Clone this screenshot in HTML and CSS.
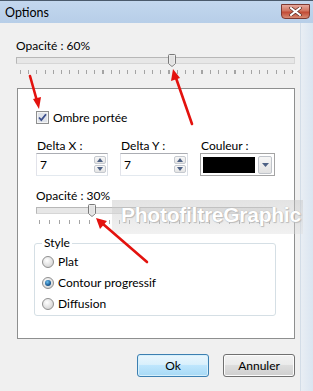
FILE: index.html
```html
<!DOCTYPE html>
<html lang="fr">
<head>
    <meta charset="UTF-8">
    <title>Options</title>
    <link rel="stylesheet" href="styles.css">
</head>
<body>
<div class="window">
    <div class="titlebar">
        <span class="title">Options</span>
        <span class="close">
            <svg width="13" height="9" viewBox="0 0 13 9">
                <path d="M2 1 L11 8 M11 1 L2 8" stroke="#5a2a22" stroke-width="3.4" stroke-linecap="square"/>
                <path d="M2 1 L11 8 M11 1 L2 8" stroke="#fff" stroke-width="2" stroke-linecap="square"/>
            </svg>
        </span>
    </div>

    <div class="main">
        <div class="content">
            <div class="label">Opacité : 60%</div>
            <div class="slider slider-wide">
                <div class="track"></div>
                <svg class="thumb" style="left: 152px" width="8" height="13" viewBox="0 0 8 13">
                    <path d="M0.5 1.5 Q0.5 0.5 1.5 0.5 H6.5 Q7.5 0.5 7.5 1.5 V9.5 L4 12.5 L0.5 9.5 Z" fill="#f4f4f4" stroke="#7a7a7a"/>
                    <path d="M1.5 1.5 H6.5 V9 L4 11.2 L1.5 9 Z" fill="#e2e2e2"/>
                </svg>
            </div>
            <div class="ticks ticks-wide"></div>

            <div class="panel">
                <div class="check-row">
                    <svg class="checkbox" width="13" height="13" viewBox="0 0 13 13">
                        <rect x="0.5" y="0.5" width="12" height="12" fill="#f4f4f4" stroke="#8e8f8f"/>
                        <rect x="2" y="2" width="9" height="9" fill="#dfe3ea"/>
                        <path d="M3 6.5 L5.3 9 L10 3.2" fill="none" stroke="#3c4f8c" stroke-width="1.8"/>
                    </svg>
                    <span>Ombre portée</span>
                </div>

                <div class="fields">
                    <div class="field field-x">
                        <div class="field-label">Delta X :</div>
                        <div class="spin">
                            <span class="spin-value">7</span>
                            <span class="spin-buttons">
                                <span class="spin-btn"><svg width="6" height="4" viewBox="0 0 6 4"><path d="M0 4 L3 0 L6 4 Z" fill="#4d6185"/></svg></span>
                                <span class="spin-btn"><svg width="6" height="4" viewBox="0 0 6 4"><path d="M0 0 L3 4 L6 0 Z" fill="#4d6185"/></svg></span>
                            </span>
                        </div>
                    </div>
                    <div class="field field-y">
                        <div class="field-label">Delta Y :</div>
                        <div class="spin">
                            <span class="spin-value">7</span>
                            <span class="spin-buttons">
                                <span class="spin-btn"><svg width="6" height="4" viewBox="0 0 6 4"><path d="M0 4 L3 0 L6 4 Z" fill="#4d6185"/></svg></span>
                                <span class="spin-btn"><svg width="6" height="4" viewBox="0 0 6 4"><path d="M0 0 L3 4 L6 0 Z" fill="#4d6185"/></svg></span>
                            </span>
                        </div>
                    </div>
                    <div class="field field-color">
                        <div class="field-label">Couleur :</div>
                        <div class="combo">
                            <span class="swatch"></span>
                            <span class="combo-btn"><svg width="7" height="4" viewBox="0 0 7 4"><path d="M0 0 L3.5 4 L7 0 Z" fill="#4d6185"/></svg></span>
                        </div>
                    </div>
                </div>

                <div class="label label-inner">Opacité : 30%</div>
                <div class="slider slider-small">
                    <div class="track"></div>
                    <svg class="thumb" style="left: 52px" width="8" height="13" viewBox="0 0 8 13">
                        <path d="M0.5 1.5 Q0.5 0.5 1.5 0.5 H6.5 Q7.5 0.5 7.5 1.5 V9.5 L4 12.5 L0.5 9.5 Z" fill="#f4f4f4" stroke="#7a7a7a"/>
                        <path d="M1.5 1.5 H6.5 V9 L4 11.2 L1.5 9 Z" fill="#e2e2e2"/>
                    </svg>
                </div>
                <div class="ticks ticks-small"></div>

                <fieldset class="style-group">
                    <legend>Style</legend>
                    <div class="radio-row">
                        <span class="radio"></span>
                        <span>Plat</span>
                    </div>
                    <div class="radio-row">
                        <span class="radio checked"></span>
                        <span>Contour progressif</span>
                    </div>
                    <div class="radio-row">
                        <span class="radio"></span>
                        <span>Diffusion</span>
                    </div>
                </fieldset>
            </div>

            <div class="buttons">
                <button class="btn btn-default">Ok</button>
                <button class="btn">Annuler</button>
            </div>
        </div>
        <div class="frame"></div>
    </div>

    <div class="watermark"><span>PhotofiltreGraphic</span></div>

    <svg class="arrows" width="313" height="391" viewBox="0 0 313 391">
        <g stroke="#e3120e" stroke-width="2.6" stroke-linecap="round" fill="#e3120e">
            <line x1="30" y1="76" x2="37" y2="101"/>
            <line x1="192" y1="124" x2="176" y2="78"/>
            <line x1="147" y1="262" x2="103" y2="224"/>
        </g>
        <g fill="#e3120e">
            <polygon points="39,109 33,99 41,97"/>
            <polygon points="173,69 171,81 180,78"/>
            <polygon points="96,218 100,229 107,221"/>
        </g>
    </svg>
</div>
</body>
</html>
```

FILE: styles.css
```css
body, html {
    width: 313px;
    height: 391px;
    margin: 0;
    padding: 0;
    overflow: hidden;
    font-family: Lato, "Noto Sans", sans-serif;
    font-size: 12px;
    color: #000;
    background-color: #f0f0f0;
}

.window {
    position: relative;
    width: 313px;
    height: 391px;
    display: flex;
    flex-direction: column;
}

.titlebar {
    height: 23px;
    box-sizing: border-box;
    border-top: 1px solid #4b5a6c;
    background: linear-gradient(#c3d7ee, #b7cee8);
    display: flex;
    align-items: flex-start;
    justify-content: space-between;
    padding: 0 3px 0 5px;
}

.title {
    font-size: 12.5px;
    line-height: 18px;
    margin-top: 3px;
}

.close {
    width: 29px;
    height: 15px;
    margin-top: 3px;
    box-sizing: border-box;
    border: 1px solid #7e3a32;
    border-radius: 0 0 4px 4px;
    background: linear-gradient(#e6a99d, #d0735f 45%, #c24a35 55%, #d68a73);
    display: flex;
    align-items: center;
    justify-content: center;
}

.main {
    flex: 1;
    display: flex;
}

.content {
    width: 284px;
    padding: 15px 0 0 16px;
}

.frame {
    flex: 1;
    border-left: 1px solid #d3dde8;
    background: linear-gradient(90deg, #e9eef4, #dae5f1);
}

.label {
    line-height: 16px;
}

/* sliders */
.slider {
    position: relative;
    height: 14px;
}

.slider-wide {
    width: 279px;
}

.slider-small {
    width: 239px;
}

.track {
    position: absolute;
    top: 3px;
    left: 0;
    right: 0;
    height: 7px;
    box-sizing: border-box;
    border: 1px solid #b7b7b7;
    border-right-color: #d6d6d6;
    border-bottom-color: #d6d6d6;
    background-color: #e7e7e7;
}

.thumb {
    position: absolute;
    top: 0;
}

.ticks {
    height: 4px;
    margin-top: 2px;
}

.ticks-wide {
    width: 276px;
    margin-left: 4px;
    background: repeating-linear-gradient(90deg, #a4a4a4 0, #a4a4a4 1px, transparent 1px, transparent 8.25px);
}

.ticks-small {
    width: 236px;
    margin-left: 3px;
    background: repeating-linear-gradient(90deg, #a4a4a4 0, #a4a4a4 1px, transparent 1px, transparent 10px);
}

/* group panel */
.panel {
    width: 278px;
    height: 251px;
    box-sizing: border-box;
    margin: 14px 0 0 1px;
    padding: 20px 0 0 18px;
    border: 1px solid #8e8f8f;
    background-color: #fff;
}

.check-row {
    display: flex;
    align-items: center;
    gap: 4px;
    height: 16px;
}

.fields {
    display: flex;
    gap: 12px;
    margin-top: 14px;
}

.field-label {
    line-height: 14px;
    padding-left: 1px;
}

.field-x .spin {
    width: 72px;
}

.field-y .spin {
    width: 68px;
}

.spin, .combo {
    height: 23px;
    box-sizing: border-box;
    border: 1px solid #abadb3;
    border-left-color: #e2e3ea;
    border-right-color: #dbdfe6;
    border-bottom-color: #e3e9ef;
    background-color: #fff;
    display: flex;
    align-items: center;
}

.spin-value {
    flex: 1;
    padding-left: 3px;
}

.spin-buttons {
    display: flex;
    flex-direction: column;
    gap: 1px;
    margin-right: 1px;
}

.spin-btn {
    width: 12px;
    height: 8px;
    box-sizing: border-box;
    border: 1px solid #c5c9cf;
    border-radius: 2px;
    background: linear-gradient(#f8f8f8, #e4e4e4);
    display: flex;
    align-items: center;
    justify-content: center;
}

.combo {
    width: 75px;
    border-color: #a4a4a4;
    padding: 0 2px;
    gap: 3px;
}

.swatch {
    width: 53px;
    height: 16px;
    background-color: #000;
}

.combo-btn {
    width: 14px;
    height: 18px;
    box-sizing: border-box;
    border: 1px solid #c0c4ca;
    border-radius: 2px;
    background: linear-gradient(#f6f6f6, #e2e2e2);
    display: flex;
    align-items: center;
    justify-content: center;
}

.label-inner {
    margin-top: 12px;
}

.style-group {
    width: 242px;
    box-sizing: border-box;
    margin: 11px 0 0 -2px;
    padding: 0 0 1px 7px;
    border: 1px solid #d5dfe5;
    border-radius: 3px;
}

.style-group legend {
    padding: 0 2px;
    margin-left: 0;
    line-height: 16px;
}

.radio-row {
    display: flex;
    align-items: center;
    gap: 4px;
    height: 21px;
}

.radio {
    width: 12px;
    height: 12px;
    box-sizing: border-box;
    border: 1px solid #8f8f8f;
    border-radius: 50%;
    background: radial-gradient(circle at 40% 35%, #ffffff, #d9d9d9 70%, #c4c4c4);
    display: flex;
    align-items: center;
    justify-content: center;
}

.radio.checked::after {
    content: "";
    width: 6px;
    height: 6px;
    border-radius: 50%;
    background: radial-gradient(circle at 40% 35%, #6cc0f0, #1a5b94 60%, #0d3a66);
}

/* buttons */
.buttons {
    display: flex;
    justify-content: flex-end;
    gap: 14px;
    width: 279px;
    margin-top: 15px;
}

.btn {
    width: 72px;
    height: 23px;
    border: 1px solid #707070;
    border-radius: 3px;
    font-family: Lato, "Noto Sans", sans-serif;
    font-size: 12px;
    color: #000;
    background: linear-gradient(#f2f2f2, #ebebeb 45%, #dddddd 50%, #cfcfcf);
    box-shadow: inset 0 0 0 1px #fcfcfc;
    padding: 0;
}

.btn-default {
    border-color: #3c7fb1;
    background: linear-gradient(#eaf6fd, #d9f0fc 45%, #bee6fd 50%, #a7d9f5);
    box-shadow: inset 0 0 0 1px #d6f0fc;
}

/* overlays */
.watermark {
    position: absolute;
    left: 112px;
    top: 200px;
    width: 191px;
    height: 34px;
    overflow: hidden;
    background: linear-gradient(rgba(200, 200, 200, 0.5), rgba(220, 220, 220, 0.4));
}

.watermark span {
    display: block;
    padding: 2px 0 0 9px;
    font-family: "Liberation Sans", Arial, sans-serif;
    font-weight: bold;
    font-size: 21px;
    line-height: 26px;
    letter-spacing: -0.25px;
    white-space: nowrap;
    color: #fff;
    text-shadow: 0 0 1px #a8a8a8, 1px 1px 1px #bdbdbd;
}

.arrows {
    position: absolute;
    left: 0;
    top: 0;
    pointer-events: none;
}
```
